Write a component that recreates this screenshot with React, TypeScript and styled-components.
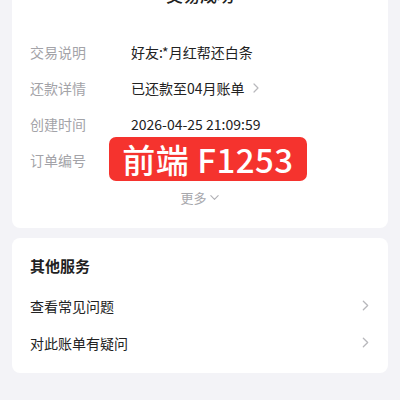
import React from "react";
import styled, { createGlobalStyle } from "styled-components";

const GlobalStyle = createGlobalStyle`
  html, body {
    margin: 0;
    padding: 0;
    background: #f3f3f7;
    font-family: "Noto Sans CJK SC", "Noto Sans", sans-serif;
    overflow: hidden;
  }
`;

const Page = styled.div`
  width: 400px;
  height: 400px;
  box-sizing: border-box;
  padding: 0 12px;
  display: flex;
  flex-direction: column;
  gap: 10px;
  overflow: hidden;
`;

const Card = styled.div<{ $offset?: number }>`
  background: #fff;
  border-radius: 8px;
  margin-top: ${(p) => (p.$offset ? `${p.$offset}px` : "0")};
  display: flex;
  flex-direction: column;
`;

const Title = styled.div`
  height: 30px;
  line-height: 30px;
  text-align: center;
  font-size: 17px;
  font-weight: 500;
  color: #222;
  margin-bottom: 24px;
`;

const DetailRow = styled.div`
  position: relative;
  height: 36px;
  display: flex;
  align-items: center;
  padding-left: 18px;
`;

const Label = styled.span`
  width: 101px;
  flex-shrink: 0;
  font-size: 14px;
  color: #a3a3a8;
`;

const Value = styled.span`
  font-size: 14px;
  color: #222;
  display: flex;
  align-items: center;
  gap: 5px;
`;

const Stamp = styled.div`
  position: absolute;
  left: 97px;
  top: -5px;
  width: 198px;
  height: 44px;
  border-radius: 7px;
  background: #f5332e;
  color: #fff;
  font-size: 33px;
  font-weight: 500;
  display: flex;
  align-items: center;
  justify-content: center;
  letter-spacing: 0.5px;
`;

const More = styled.div`
  display: flex;
  align-items: center;
  justify-content: center;
  gap: 2px;
  height: 30px;
  margin: 4px 0 16px;
  font-size: 13px;
  color: #a8a8ad;
`;

const Section = styled.div`
  padding: 17px 18px 0;
  font-size: 15px;
  font-weight: 700;
  color: #1f1f1f;
  height: 22px;
  line-height: 22px;
`;

const LinkRow = styled.div`
  height: 37px;
  display: flex;
  align-items: center;
  justify-content: space-between;
  padding: 0 16px 0 18px;
  font-size: 14px;
  color: #222;
`;

const Spacer = styled.div<{ $h: number }>`
  height: ${(p) => p.$h}px;
`;

const Chevron = ({ dir = "right", size = 12, color = "#b8b8bc" }: { dir?: "right" | "down"; size?: number; color?: string }) => (
  <svg width={size} height={size} viewBox="0 0 12 12" fill="none">
    {dir === "right" ? (
      <path d="M4 2l4 4-4 4" stroke={color} strokeWidth="1.2" strokeLinecap="round" strokeLinejoin="round" />
    ) : (
      <path d="M2 4l4 4 4-4" stroke={color} strokeWidth="1.2" strokeLinecap="round" strokeLinejoin="round" />
    )}
  </svg>
);

export default function App() {
  return (
    <>
      <GlobalStyle />
      <Page>
        <Card $offset={-20}>
          <Title>交易成功</Title>
          <DetailRow>
            <Label>交易说明</Label>
            <Value>好友:*月红帮还白条</Value>
          </DetailRow>
          <DetailRow>
            <Label>还款详情</Label>
            <Value>
              已还款至04月账单
              <Chevron />
            </Value>
          </DetailRow>
          <DetailRow>
            <Label>创建时间</Label>
            <Value>2026-04-25 21:09:59</Value>
          </DetailRow>
          <DetailRow>
            <Label>订单编号</Label>
            <Stamp>前端 F1253</Stamp>
          </DetailRow>
          <More>
            更多
            <Chevron dir="down" size={11} color="#b0b0b5" />
          </More>
        </Card>
        <Card>
          <Section>其他服务</Section>
          <Spacer $h={10} />
          <LinkRow>
            查看常见问题
            <Chevron size={13} />
          </LinkRow>
          <LinkRow>
            对此账单有疑问
            <Chevron size={13} />
          </LinkRow>
          <Spacer $h={12} />
        </Card>
      </Page>
    </>
  );
}
